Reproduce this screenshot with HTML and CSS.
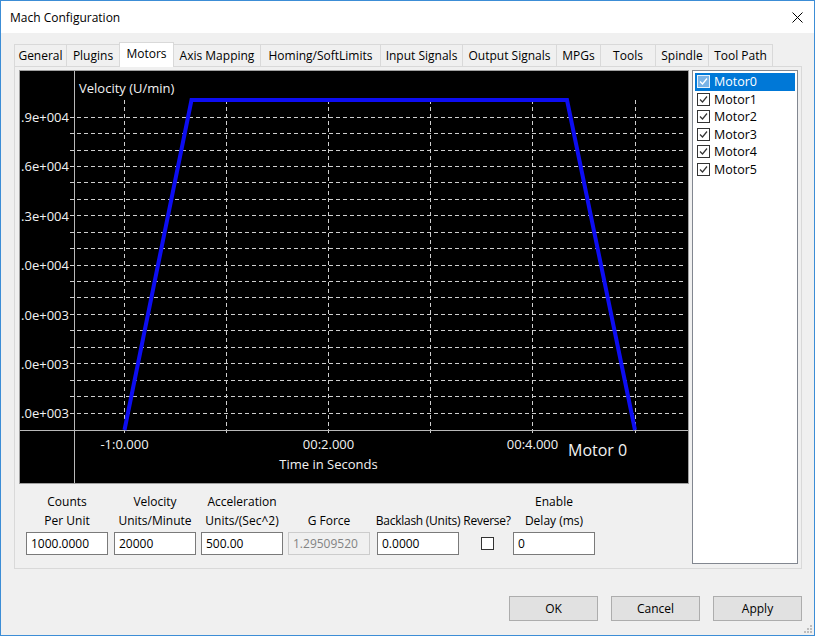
FILE: index.html
```html
<!DOCTYPE html>
<html>
<head>
<meta charset="utf-8">
<title>Mach Configuration</title>
<link rel="stylesheet" href="styles.css">
</head>
<body>
<div class="window">
  <div class="titlebar">
    <span class="title">Mach Configuration</span>
    <svg class="close" width="11" height="11" viewBox="0 0 11 11"><path d="M0.5 0.5L10.5 10.5M10.5 0.5L0.5 10.5" stroke="#000" stroke-width="1" fill="none"/></svg>
  </div>
  <div class="client">
    <div class="tabs">
      <div class="tab">General</div>
      <div class="tab">Plugins</div>
      <div class="tab active">Motors</div>
      <div class="tab">Axis Mapping</div>
      <div class="tab">Homing/SoftLimits</div>
      <div class="tab">Input Signals</div>
      <div class="tab">Output Signals</div>
      <div class="tab">MPGs</div>
      <div class="tab">Tools</div>
      <div class="tab">Spindle</div>
      <div class="tab">Tool Path</div>
    </div>
    <div class="tabpage">
      <div class="main">
        <div class="chart">
          <svg width="668" height="412" viewBox="0 0 668 412">
            <path class="grid" d="M50 46.5H664M50 62.5H664M50 79.5H664M50 95.5H664M50 111.5H664M50 128.5H664M50 144.5H664M50 161.5H664M50 177.5H664M50 194.5H664M50 210.5H664M50 226.5H664M50 243.5H664M50 259.5H664M50 276.5H664M50 292.5H664M50 309.5H664M50 325.5H664M50 342.5H664"/>
            <path class="grid" d="M104.5 29V365M206.5 29V365M308.5 29V365M410.5 29V365M512.5 29V365M615.5 29V365"/>
            <path class="axis" d="M54.5 0V412M0 359.5H668"/>
            <path class="curve" d="M104.5 359L171.5 29L547 29L615 359"/>
            <text x="59" y="21.5">Velocity (U/min)</text>
            <text class="ylab" x="49" y="50.5">.9e+004</text>
            <text class="ylab" x="49" y="100">.6e+004</text>
            <text class="ylab" x="49" y="149.5">.3e+004</text>
            <text class="ylab" x="49" y="199">.0e+004</text>
            <text class="ylab" x="49" y="248.5">.0e+003</text>
            <text class="ylab" x="49" y="298">.0e+003</text>
            <text class="ylab" x="49" y="347">.0e+003</text>
            <text class="xlab" x="104.5" y="377.5">-1:0.000</text>
            <text class="xlab" x="308.5" y="377.5">00:2.000</text>
            <text class="xlab" x="512.5" y="377.5">00:4.000</text>
            <text class="xlab" x="308.5" y="397.5">Time in Seconds</text>
            <text class="motor" x="548" y="385">Motor 0</text>
          </svg>
        </div>
        <div class="fields">
          <div class="field">
            <div class="label"><span>Counts</span><span>Per Unit</span></div>
            <div class="textbox">1000.0000</div>
          </div>
          <div class="field">
            <div class="label"><span>Velocity</span><span>Units/Minute</span></div>
            <div class="textbox">20000</div>
          </div>
          <div class="field">
            <div class="label"><span>Acceleration</span><span>Units/(Sec^2)</span></div>
            <div class="textbox">500.00</div>
          </div>
          <div class="field">
            <div class="label"><span>G Force</span></div>
            <div class="textbox disabled">1.29509520</div>
          </div>
          <div class="field">
            <div class="label tight"><span>Backlash (Units)</span></div>
            <div class="textbox">0.0000</div>
          </div>
          <div class="field field-check">
            <div class="label tight"><span>Reverse?</span></div>
            <div class="checkrow"><span class="cb"></span></div>
          </div>
          <div class="field">
            <div class="label"><span>Enable</span><span>Delay (ms)</span></div>
            <div class="textbox">0</div>
          </div>
        </div>
      </div>
      <div class="listbox">
        <div class="item selected"><span class="cb checked"><svg width="11" height="11" viewBox="0 0 11 11"><path d="M2 5.5L4.5 8L9 2.5" fill="none" stroke="#fff" stroke-width="1.3"/></svg></span><span>Motor0</span></div>
        <div class="item"><span class="cb checked"><svg width="11" height="11" viewBox="0 0 11 11"><path d="M2 5.5L4.5 8L9 2.5" fill="none" stroke="#333" stroke-width="1.2"/></svg></span><span>Motor1</span></div>
        <div class="item"><span class="cb checked"><svg width="11" height="11" viewBox="0 0 11 11"><path d="M2 5.5L4.5 8L9 2.5" fill="none" stroke="#333" stroke-width="1.2"/></svg></span><span>Motor2</span></div>
        <div class="item"><span class="cb checked"><svg width="11" height="11" viewBox="0 0 11 11"><path d="M2 5.5L4.5 8L9 2.5" fill="none" stroke="#333" stroke-width="1.2"/></svg></span><span>Motor3</span></div>
        <div class="item"><span class="cb checked"><svg width="11" height="11" viewBox="0 0 11 11"><path d="M2 5.5L4.5 8L9 2.5" fill="none" stroke="#333" stroke-width="1.2"/></svg></span><span>Motor4</span></div>
        <div class="item"><span class="cb checked"><svg width="11" height="11" viewBox="0 0 11 11"><path d="M2 5.5L4.5 8L9 2.5" fill="none" stroke="#333" stroke-width="1.2"/></svg></span><span>Motor5</span></div>
      </div>
    </div>
    <div class="buttons">
      <div class="btn">OK</div>
      <div class="btn">Cancel</div>
      <div class="btn">Apply</div>
    </div>
  </div>
  <svg class="grip" width="8" height="8" viewBox="0 0 8 8"><path d="M6 0h2v2h-2zM3 3h2v2h-2zM6 3h2v2h-2zM0 6h2v2h-2zM3 6h2v2h-2zM6 6h2v2h-2z" fill="#bdbdbd"/></svg>
</div>
</body>
</html>
```
FILE: styles.css
```css
html, body {
  margin: 0;
  padding: 0;
  background: #ffffff;
}
body {
  font-family: "Open Sans", "Noto Sans", sans-serif;
  font-size: 12px;
  color: #000;
}
.window {
  position: relative;
  width: 815px;
  height: 636px;
  box-sizing: border-box;
  border: 1px solid #3c8dd6;
  background: #f0f0f0;
  display: flex;
  flex-direction: column;
}
.titlebar {
  flex: none;
  height: 32px;
  background: #fff;
  display: flex;
  align-items: center;
  justify-content: space-between;
  padding-left: 9px;
}
.title {
  font-size: 12px;
}
.close {
  margin-right: 11px;
  display: block;
}
.client {
  flex: 1;
  display: flex;
  flex-direction: column;
  padding: 9px 12px 0 13px;
}
.tabs {
  position: relative;
  z-index: 1;
  display: grid;
  grid-template-columns: 52px 53px 55px 86px 120px 82px 94px 44px 55px 53px 65px;
  height: 24px;
  align-items: end;
}
.tab {
  height: 22px;
  box-sizing: border-box;
  border: 1px solid #d9d9d9;
  border-bottom: none;
  border-right: none;
  background: #f0f0f0;
  text-align: center;
  line-height: 22px;
  white-space: nowrap;
}
.tab:last-child {
  border-right: 1px solid #d9d9d9;
}
.tab.active {
  height: 25px;
  margin-bottom: -1px;
  background: #fff;
  border-right: 1px solid #d9d9d9;
  line-height: 21px;
}
.tab.active + .tab {
  border-left: none;
}
.tabpage {
  height: 503px;
  box-sizing: border-box;
  border: 1px solid #d9d9d9;
  background: #f0f0f0;
  padding: 3px 3px 4px 4px;
  display: flex;
  align-items: flex-start;
  gap: 3px;
}
.main {
  width: 670px;
  display: flex;
  flex-direction: column;
}
.chart {
  width: 670px;
  height: 414px;
  box-sizing: border-box;
  border: 1px solid #a0a0a0;
  background: #000;
}
.chart svg {
  display: block;
}
.chart text {
  font-family: "Open Sans", "Noto Sans", sans-serif;
  font-size: 13px;
  fill: #f2f2f2;
}
.chart .ylab {
  text-anchor: end;
}
.chart .xlab {
  text-anchor: middle;
}
.chart .motor {
  font-size: 16px;
}
.grid {
  fill: none;
  stroke: #cfcfcf;
  stroke-width: 1;
  stroke-dasharray: 4 3;
}
.axis {
  fill: none;
  stroke: #b9b9b9;
  stroke-width: 1;
}
.curve {
  fill: none;
  stroke: #0d0df2;
  stroke-width: 4;
  stroke-linejoin: miter;
}
.fields {
  display: grid;
  grid-template-columns: 88px 87px 87px 89px 84px 52px 82px;
  margin: 8px 0 0 7px;
}
.field {
  width: 82px;
  display: flex;
  flex-direction: column;
}
.field-check {
  width: 52px;
}
.label {
  height: 38px;
  display: flex;
  flex-direction: column;
  justify-content: flex-end;
  align-items: center;
  line-height: 19px;
  white-space: nowrap;
}
.label.tight {
  letter-spacing: -0.25px;
}
.textbox {
  margin-top: 2px;
  height: 23px;
  box-sizing: border-box;
  border: 1px solid #7a7a7a;
  background: #fff;
  padding: 0 4px;
  line-height: 21px;
  white-space: nowrap;
  overflow: hidden;
}
.textbox.disabled {
  border-color: #cccccc;
  background: #f0f0f0;
  color: #838383;
}
.checkrow {
  margin-top: 2px;
  height: 23px;
  display: flex;
  align-items: center;
  justify-content: center;
}
.cb {
  width: 13px;
  height: 13px;
  box-sizing: border-box;
  border: 1px solid #333;
  background: #fff;
  flex: none;
  display: block;
}
.cb svg {
  display: block;
}
.listbox {
  width: 106px;
  height: 494px;
  box-sizing: border-box;
  border: 1px solid #828790;
  background: #fff;
  padding: 2px;
}
.item {
  height: 17.5px;
  display: flex;
  align-items: center;
  gap: 4px;
  padding-left: 2px;
  white-space: nowrap;
  font-size: 12.5px;
}
.item.selected {
  background: #0078d7;
  color: #fff;
}
.item.selected .cb {
  background: #7ab3e6;
  border-color: #e6f1fb;
}
.buttons {
  display: flex;
  justify-content: flex-end;
  gap: 13px;
  margin-top: 27px;
}
.btn {
  width: 89px;
  height: 25px;
  box-sizing: border-box;
  border: 1px solid #adadad;
  background: #e1e1e1;
  display: flex;
  align-items: center;
  justify-content: center;
}
.grip {
  position: absolute;
  right: 2px;
  bottom: 2px;
  display: block;
}
```
